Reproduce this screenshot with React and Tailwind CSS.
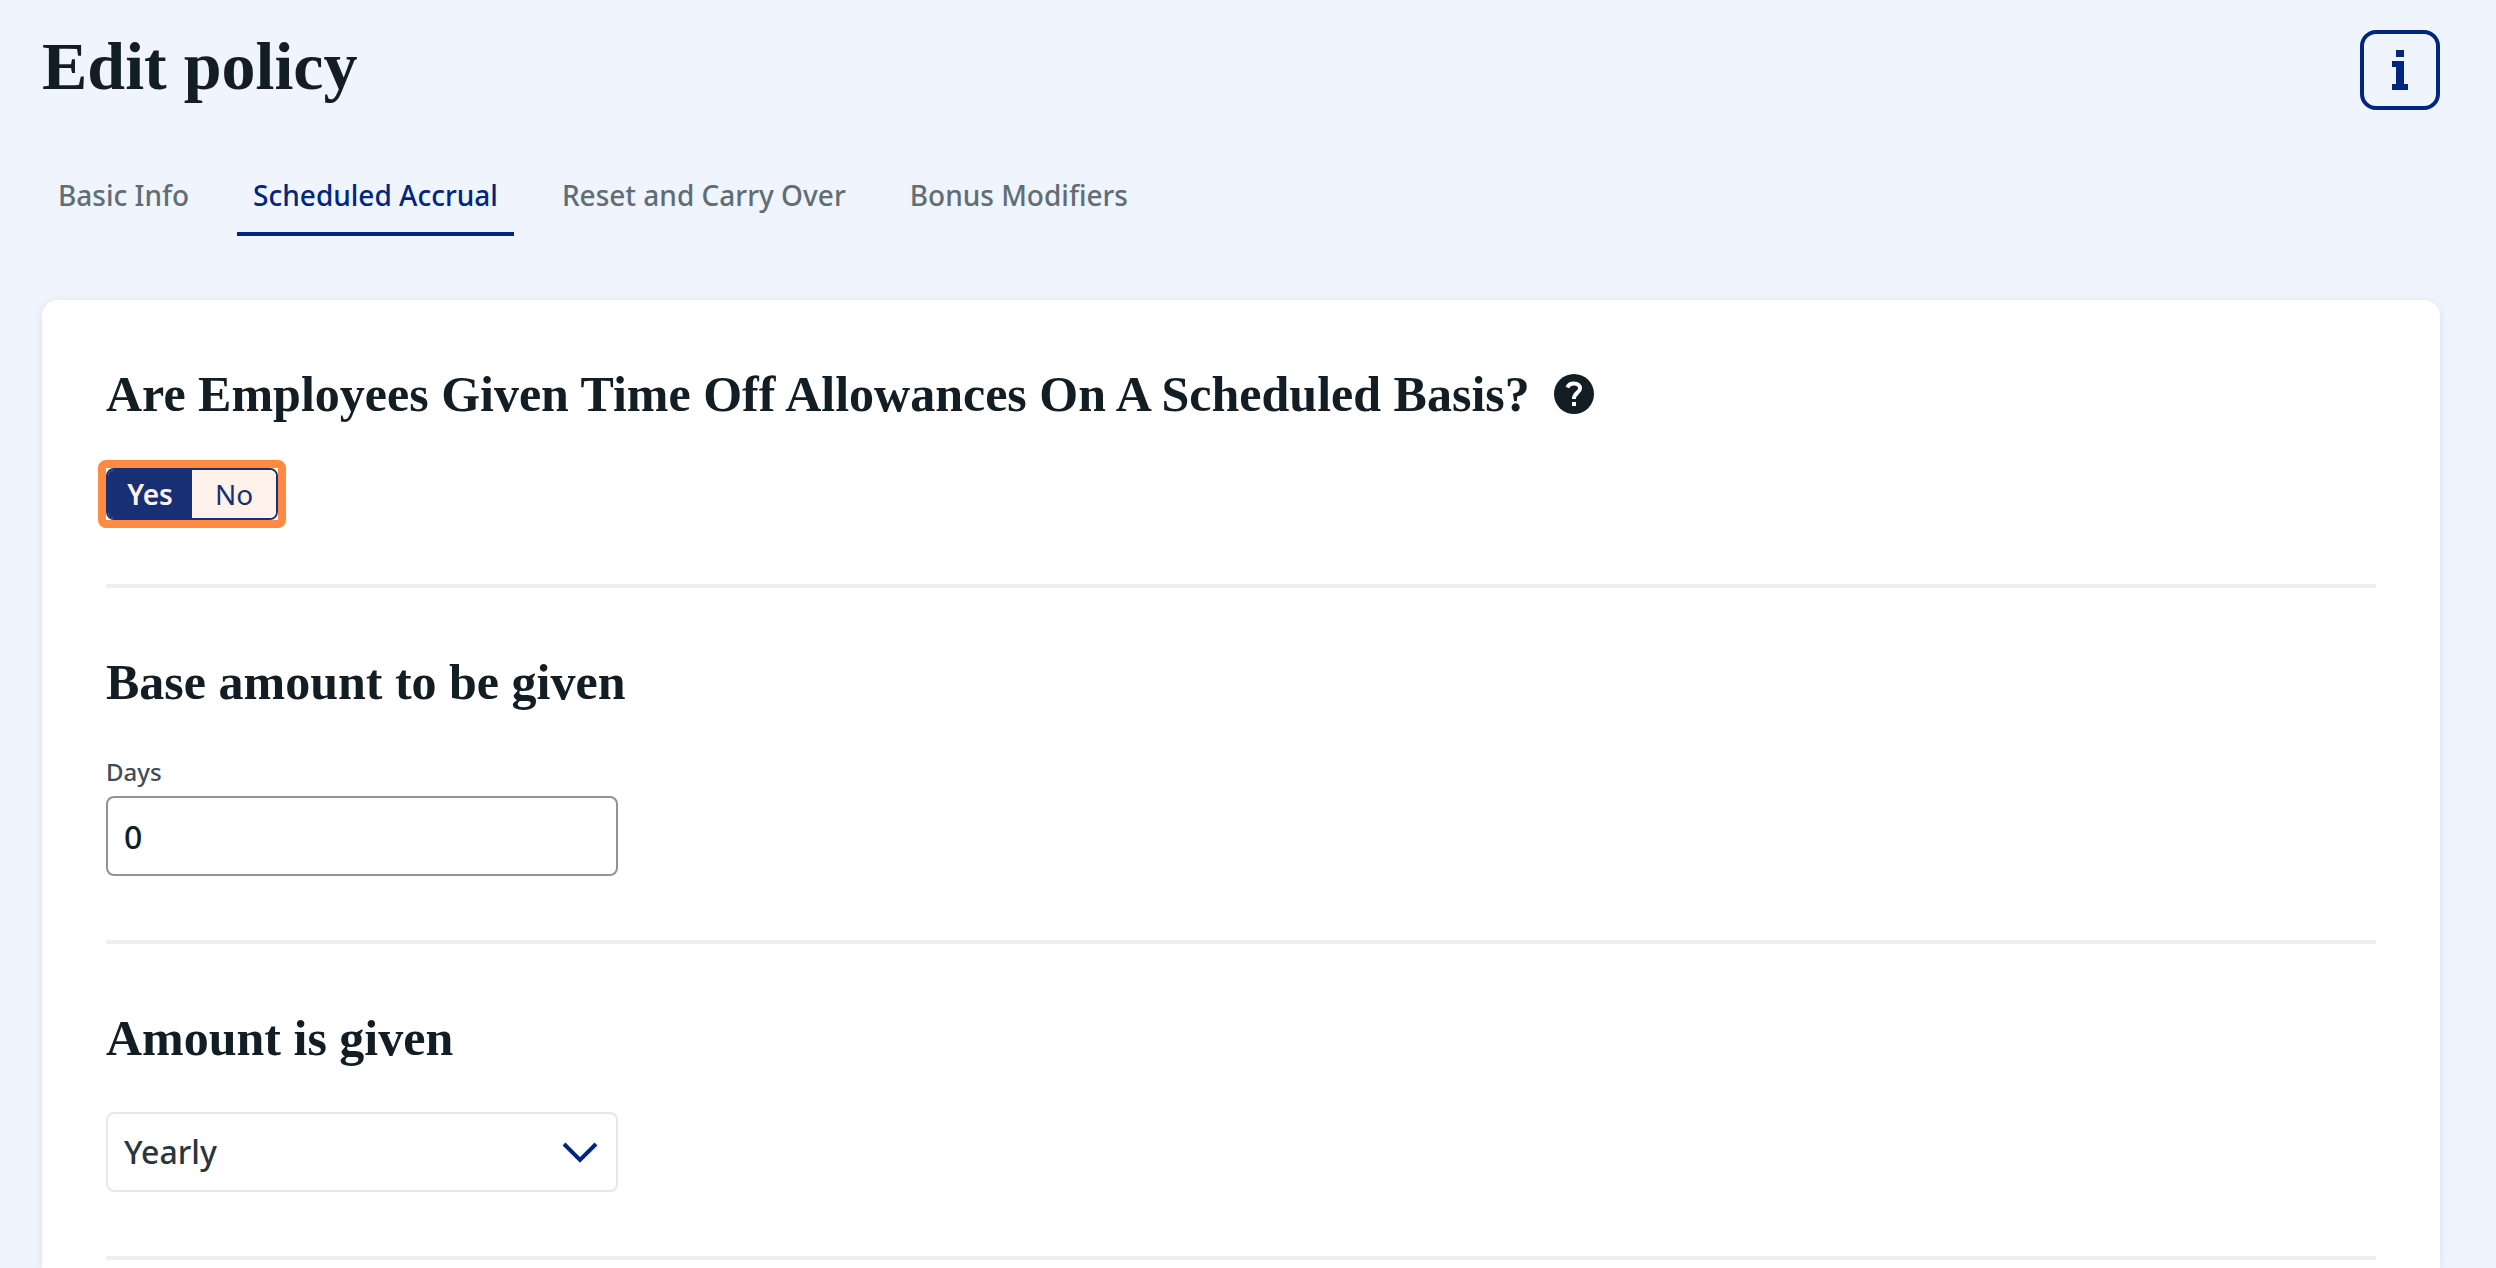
import React, { useState } from 'react';
import clsx from 'clsx';

const tabs = ['Basic Info', 'Scheduled Accrual', 'Reset and Carry Over', 'Bonus Modifiers'];

function InfoIcon() {
  return (
    <svg viewBox="0 0 16 40" className="h-10 w-4" fill="currentColor" aria-hidden="true">
      <rect x="4" y="0" width="8" height="7" />
      <rect x="0" y="11" width="8" height="6" />
      <rect x="4" y="11" width="8" height="28" />
      <rect x="0" y="34" width="16" height="6" />
    </svg>
  );
}

function HelpIcon() {
  return (
    <svg viewBox="0 0 40 40" className="size-10" fill="none" aria-hidden="true">
      <circle cx="20" cy="20" r="20" fill="#121d24" />
      <path
        d="M13.5 13.5 C14.5 10.5 17 9.5 20 9.5 C23.5 9.5 26 11.5 26 14.5 C26 19 20 18.5 20 25"
        stroke="#ffffff"
        strokeWidth="4"
      />
      <rect x="18" y="28" width="4" height="4" fill="#ffffff" />
    </svg>
  );
}

function Section({ title, help, children }) {
  return (
    <section className="border-b-4 border-[#efefef] pt-16 pb-16">
      <div className="flex items-center gap-6">
        <h2 className="font-['Liberation_Serif',serif] text-[50px] leading-[60px] font-bold">{title}</h2>
        {help && (
          <button type="button" aria-label="Help">
            <HelpIcon />
          </button>
        )}
      </div>
      <div className="mt-11">{children}</div>
    </section>
  );
}

function YesNoToggle({ value, onChange }) {
  return (
    <div className="relative inline-flex align-top">
      <div className="flex h-[52px] w-[172px] overflow-hidden rounded-lg border-2 border-[#192f73] text-[28px] leading-[42px]">
        {['Yes', 'No'].map((option) => (
          <button
            key={option}
            type="button"
            aria-pressed={value === option}
            onClick={() => onChange(option)}
            className={clsx(
              'flex-1',
              value === option ? 'bg-[#192f73] font-semibold text-[#fff2eb]' : 'bg-[#fff2eb] text-[#192f73]'
            )}
          >
            {option}
          </button>
        ))}
      </div>
      {/* Highlight frame */}
      <div className="pointer-events-none absolute -inset-2 rounded-lg border-8 border-[#ff8a42]" />
    </div>
  );
}

export default function App() {
  const [activeTab, setActiveTab] = useState('Scheduled Accrual');
  const [scheduled, setScheduled] = useState('Yes');
  const [days, setDays] = useState('0');
  const [frequency, setFrequency] = useState('Yearly');

  return (
    <div className="flex min-h-screen flex-col bg-[#f0f4fc] pt-[30px] pr-14 pl-[42px] font-['Noto_Sans',sans-serif] text-[#121d24]">
      <header className="flex items-start justify-between">
        <h1 className="font-['Liberation_Serif',serif] text-[68px] leading-[72px] font-bold">Edit policy</h1>
        <button
          type="button"
          aria-label="Information"
          className="flex size-20 items-center justify-center rounded-2xl border-4 border-[#00267f] text-[#00267f]"
        >
          <InfoIcon />
        </button>
      </header>

      <nav className="mt-16 flex gap-8">
        {tabs.map((tab) => (
          <button
            key={tab}
            type="button"
            onClick={() => setActiveTab(tab)}
            className={clsx(
              'border-b-4 px-4 pb-4 text-[28px] leading-[42px] font-medium',
              activeTab === tab ? 'border-[#00267f] text-[#00267f]' : 'border-transparent text-[#616d75]'
            )}
          >
            {tab}
          </button>
        ))}
      </nav>

      <main className="mt-16 flex-1 rounded-t-2xl bg-white px-16 shadow-[0_2px_8px_rgba(0,38,127,0.1)]">
        <Section title="Are Employees Given Time Off Allowances On A Scheduled Basis?" help>
          <YesNoToggle value={scheduled} onChange={setScheduled} />
        </Section>

        <Section title="Base amount to be given">
          <label htmlFor="days" className="mb-2 block text-2xl leading-8 font-medium text-[#414d55]">
            Days
          </label>
          <input
            id="days"
            type="text"
            inputMode="numeric"
            value={days}
            onChange={(e) => setDays(e.target.value)}
            className="block h-20 w-lg rounded-lg border-2 border-[#929297] px-4 text-[32px] font-medium"
          />
        </Section>

        <Section title="Amount is given">
          <div className="relative w-lg">
            <select
              aria-label="Amount is given"
              value={frequency}
              onChange={(e) => setFrequency(e.target.value)}
              className="block h-20 w-full appearance-none rounded-lg border-2 border-[#e8e8e8] bg-white px-4 text-[32px] font-medium text-[#2a353c]"
            >
              <option>Yearly</option>
              <option>Monthly</option>
              <option>Weekly</option>
            </select>
            <svg
              viewBox="0 0 36 24"
              className="pointer-events-none absolute top-7 right-5 h-6 w-9"
              fill="none"
              stroke="#00267f"
              strokeWidth="4"
            >
              <path d="M2 4 L18 20 L34 4" />
            </svg>
          </div>
        </Section>
      </main>
    </div>
  );
}
